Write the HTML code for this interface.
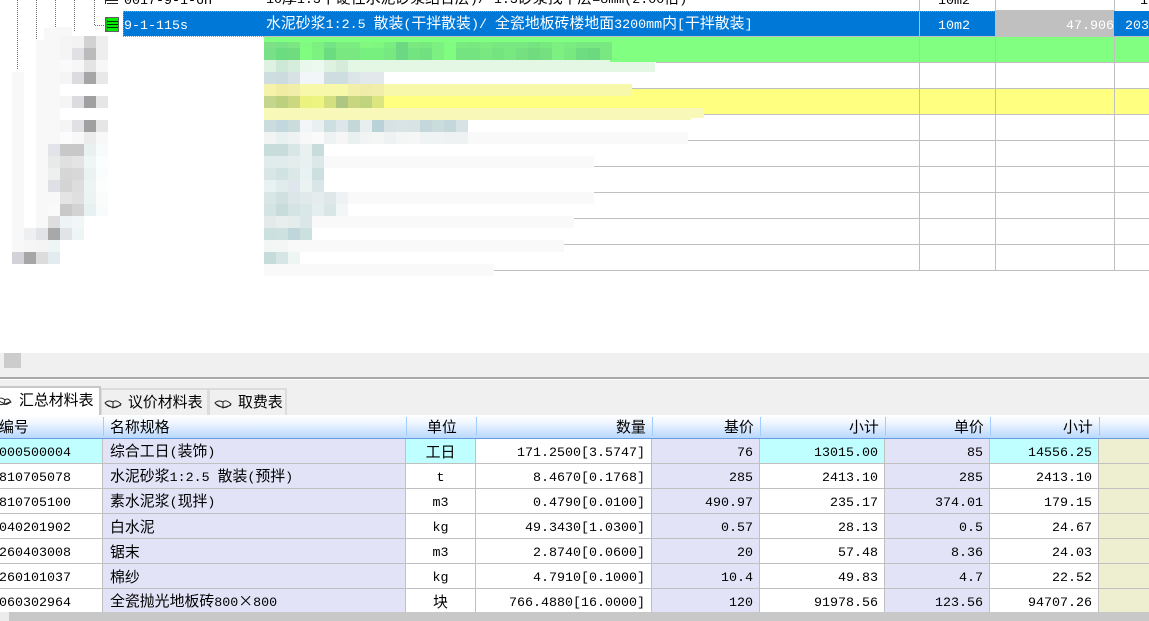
<!DOCTYPE html>
<html><head><meta charset="utf-8">
<style>
html,body{margin:0;padding:0;background:#fff}
#p{position:relative;width:1149px;height:621px;overflow:hidden;background:#fff;font-family:"WenQuanYi Zen Hei","Noto Sans CJK SC",sans-serif;font-size:14.9px;color:#000}
.a{position:absolute;white-space:nowrap;line-height:18px}
i{font-family:"Liberation Mono",monospace;font-size:13.33px;font-style:normal}
.c rect{width:12px;height:12px}
table{position:absolute;left:0;top:439px;border-collapse:separate;border-spacing:0;table-layout:fixed;width:1149px}
tr{height:25px}
td{padding:2px 6px 0;border-right:1px solid #c0c0c0;border-bottom:1px solid #c0c0c0;white-space:nowrap;overflow:hidden;box-sizing:border-box;height:25px;line-height:16px;vertical-align:middle}
td:last-child{border-right:0;background:#eeeed0}
td:nth-child(1){padding:2px 0 0;text-indent:-1px}
td:nth-child(2),td:nth-child(5),td:nth-child(7){background:#e3e3f8}
td:nth-child(2){padding-left:7px}
td:nth-child(3){text-align:center}
td:nth-child(4),td:nth-child(5),td:nth-child(6),td:nth-child(7),td:nth-child(8){text-align:right}
.k td:nth-child(1),.k td:nth-child(3),.k td:nth-child(6),.k td:nth-child(8){background:#c0ffff}
.h{position:absolute;top:418px;color:#000;white-space:nowrap;line-height:18px}
.s{position:absolute;top:417px;width:1px;height:19px;background:#a0ccff}
.tab{position:absolute;box-sizing:border-box;border:2px solid #dcdcdc;border-bottom:0;background:#f0f0f0}
</style></head><body><div id="p">

<!-- top grid rows -->
<div class="a" style="left:264px;top:37px;width:885px;height:25px;background:#80ff80"></div>
<div class="a" style="left:264px;top:89px;width:885px;height:25px;background:#ffff80"></div>
<div class="a" style="left:656px;top:62px;width:493px;height:1px;background:#c0c0c0"></div>
<div class="a" style="left:631px;top:88px;width:518px;height:1px;background:#c0c0c0"></div>
<div class="a" style="left:704px;top:114px;width:445px;height:1px;background:#c0c0c0"></div>
<div class="a" style="left:642px;top:140px;width:507px;height:1px;background:#c0c0c0"></div>
<div class="a" style="left:590px;top:166px;width:559px;height:1px;background:#c0c0c0"></div>
<div class="a" style="left:590px;top:192px;width:559px;height:1px;background:#c0c0c0"></div>
<div class="a" style="left:570px;top:218px;width:579px;height:1px;background:#c0c0c0"></div>
<div class="a" style="left:490px;top:244px;width:659px;height:1px;background:#c0c0c0"></div>
<div class="a" style="left:480px;top:270px;width:669px;height:1px;background:#c0c0c0"></div>
<div class="a" style="left:919px;top:0;width:1px;height:271px;background:#c0c0c0"></div>
<div class="a" style="left:995px;top:0;width:1px;height:271px;background:#c0c0c0"></div>
<div class="a" style="left:1114px;top:0;width:1px;height:271px;background:#c0c0c0"></div>

<!-- clipped first row -->
<div class="a" style="left:124px;top:-10px"><i>0017-9-1-6H</i></div>
<div class="a" style="left:266px;top:-11px"><i>10</i>厚<i>1:3</i>干硬性水泥砂浆结合层<i>)/ 1:3</i>砂浆找平层<i>=8mm(2.00</i>倍<i>)</i></div>
<div class="a" style="left:938px;top:-10px"><i>10m2</i></div>
<div class="a" style="left:1140px;top:-10px"><i>1</i></div>

<!-- tree lines -->
<svg class="a" style="left:0;top:0" width="125" height="80" viewBox="0 0 125 80">
<g stroke="#707070" stroke-width="1" stroke-dasharray="1 1" fill="none">
<path d="M17.5 0V70M36.5 0V58M55.5 0V27M74.5 0V31M94.5 0V25.5H105"/>
</g>
<path d="M105.500 0V4M105 .5H118M107 3.500H118" stroke="#222" fill="none"/>
<rect x="105.500" y="17.500" width="13" height="14" fill="#00f000" stroke="#606060"/>
<path d="M107 21.500H118M107 24.500H118M107 27.500H118" stroke="#003000"/>
<path d="M107 18V31" stroke="#404040" stroke-dasharray="1 1"/>
</svg>

<!-- selected row -->
<div class="a" style="left:123px;top:11px;width:1026px;height:25px;background:#0078d7"></div>
<div class="a" style="left:123px;top:11px;width:873px;height:26px;box-sizing:border-box;border:1px dotted #e08a30;border-right:0"></div>
<div class="a" style="left:264px;top:36px;width:885px;height:1px;background:#c0c0c0"></div>
<div class="a" style="left:995px;top:10px;width:119px;height:26px;background:#c0c0c0"></div>
<div class="a" style="left:919px;top:11px;width:1px;height:26px;background:#c0c0c0"></div>
<div class="a" style="left:124px;top:15px;color:#fff"><i>9-1-115s</i></div>
<div class="a" style="left:266px;top:14px;color:#fff">水泥砂浆<i>1:2.5 </i>散装<i>(</i>干拌散装<i>)/ </i>全瓷地板砖楼地面<i>3200mm</i>内<i>[</i>干拌散装<i>]</i></div>
<div class="a" style="left:938px;top:15px;color:#fff"><i>10m2</i></div>
<div class="a" style="left:1066px;top:15px;color:#fff"><i>47.906</i></div>
<div class="a" style="left:1125px;top:15px;color:#fff"><i>203</i></div>

<!-- mosaic -->
<svg class="a" style="left:0;top:0" width="1149" height="300" viewBox="0 0 1149 300">
<path d="M36 70V40H44V28H56V27H72V36H60V264H36ZM12 72H24V252H12Z" fill="#f8f8f8"/>
<rect x="264" y="60" width="391" height="12" fill="#e4f7e4"/>
<rect x="610" y="55" width="46" height="7" fill="#80ff80"/>
<rect x="264" y="84" width="368" height="12" fill="#f8f8aa"/>
<rect x="264" y="108" width="440" height="10" fill="#f8f8b8"/>
<rect x="264" y="118" width="427" height="2" fill="#f8f8b8"/>
<rect x="264" y="132" width="424" height="12" fill="#f9f9f9"/>
<rect x="264" y="156" width="330" height="12" fill="#f9f9f9"/>
<rect x="264" y="192" width="330" height="12" fill="#f9f9f9"/>
<rect x="264" y="216" width="310" height="12" fill="#f9f9f9"/>
<rect x="264" y="240" width="300" height="12" fill="#f9f9f9"/>
<rect x="264" y="264" width="230" height="12" fill="#f9f9f9"/>
<g class="c">
<rect x="60" y="36" fill="#f5f5f5"/><rect x="72" y="36" fill="#f3f3f3"/><rect x="84" y="36" fill="#d2d2d2"/><rect x="96" y="36" fill="#eee"/>
<rect x="60" y="48" fill="#f5f5f5"/><rect x="72" y="48" fill="#e0e0e5"/><rect x="84" y="48" fill="#bbb"/><rect x="96" y="48" fill="#eee"/>
<rect x="60" y="60" fill="#fafafa"/><rect x="72" y="60" fill="#f7f7f7"/><rect x="84" y="60" fill="#e4e4e4"/><rect x="96" y="60" fill="#f7f7f7"/>
<rect x="60" y="72" fill="#f5f5f5"/><rect x="72" y="72" fill="#dcdce0"/><rect x="84" y="72" fill="#a6a6a6"/><rect x="96" y="72" fill="#e8e8e8"/>
<rect x="60" y="96" fill="#f5f5f5"/><rect x="72" y="96" fill="#dcdce0"/><rect x="84" y="96" fill="#a0a0a0"/><rect x="96" y="96" fill="#e6e6e6"/>
<rect x="60" y="120" fill="#f5f5f5"/><rect x="72" y="120" fill="#e0e0e5"/><rect x="84" y="120" fill="#a0a0a0"/><rect x="96" y="120" fill="#e6e6e6"/>
<rect x="60" y="132" fill="#fcfcfc"/><rect x="72" y="132" fill="#f8f8f8"/><rect x="84" y="132" fill="#ececec"/><rect x="96" y="132" fill="#f8f8f8"/>
<rect x="48" y="144" fill="#e3e3ea"/><rect x="60" y="144" fill="#c8c8c8"/><rect x="72" y="144" fill="#c8c8c8"/><rect x="84" y="144" fill="#e8f0f0"/><rect x="96" y="144" fill="#f8fbfb"/>
<rect x="48" y="156" fill="#e8e9e9"/><rect x="60" y="156" fill="#e0e0e0"/><rect x="72" y="156" fill="#e4e4e4"/><rect x="84" y="156" fill="#f0f6f6"/><rect x="96" y="156" fill="#fbfefe"/>
<rect x="48" y="168" fill="#eef0f0"/><rect x="60" y="168" fill="#d6d6d6"/><rect x="72" y="168" fill="#d8d8d8"/><rect x="84" y="168" fill="#eaf2f2"/><rect x="96" y="168" fill="#fafdfd"/>
<rect x="48" y="180" fill="#dfdfe6"/><rect x="60" y="180" fill="#d4d4d4"/><rect x="72" y="180" fill="#ddd"/><rect x="84" y="180" fill="#ecf4f4"/><rect x="96" y="180" fill="#fcfefe"/>
<rect x="48" y="192" fill="#f8f8f8"/><rect x="60" y="192" fill="#e4e4e4"/><rect x="72" y="192" fill="#dfdfdf"/><rect x="84" y="192" fill="#ecf3f3"/><rect x="96" y="192" fill="#fafcfc"/>
<rect x="48" y="204" fill="#fafafa"/><rect x="60" y="204" fill="#c9c9c9"/><rect x="72" y="204" fill="#d3d3d3"/><rect x="84" y="204" fill="#e8f1f1"/><rect x="96" y="204" fill="#f8fbfb"/>
<rect x="48" y="216" fill="#dedede"/><rect x="60" y="216" fill="#eef3f5"/><rect x="72" y="216" fill="#f2f6f7"/>
<rect x="24" y="228" fill="#eeeff1"/><rect x="36" y="228" fill="#e2e3e6"/><rect x="48" y="228" fill="#a8a8a8"/><rect x="60" y="228" fill="#e0e4e6"/><rect x="72" y="228" fill="#eef5f5"/>
<rect x="24" y="240" fill="#f6f6f6"/><rect x="36" y="240" fill="#f4f4f4"/><rect x="48" y="240" fill="#eef5f5"/>
<rect x="12" y="252" fill="#d2d2d8"/><rect x="24" y="252" fill="#a6a6a6"/><rect x="36" y="252" fill="#dcdcdc"/><rect x="48" y="252" fill="#e2ebed"/>

<rect x="264" y="60" fill="#dff2e2"/><rect x="276" y="60" fill="#cde8d6"/><rect x="288" y="60" fill="#d6eddb"/><rect x="300" y="60" fill="#e8f8ea"/><rect x="312" y="60" fill="#ecf9ee"/><rect x="324" y="60" fill="#dff2e2"/><rect x="336" y="60" fill="#d6ebd9"/>
<rect x="264" y="72" fill="#cddde0"/><rect x="276" y="72" fill="#ccdbdf"/><rect x="288" y="72" fill="#d8e2e4"/><rect x="300" y="72" fill="#f2f6f8"/><rect x="312" y="72" fill="#f2f6f8"/><rect x="324" y="72" fill="#cddde0"/><rect x="336" y="72" fill="#cddde0"/><rect x="348" y="72" fill="#dce5e8"/><rect x="360" y="72" fill="#e2e8eb"/><rect x="372" y="72" fill="#e2e8eb"/>
<rect x="264" y="84" fill="#f5f3aa"/><rect x="276" y="84" fill="#f0eca4"/><rect x="288" y="84" fill="#f0eea8"/><rect x="348" y="84" fill="#f2f0a8"/><rect x="360" y="84" fill="#eeeca8"/><rect x="372" y="84" fill="#f0eeaa"/>
<rect x="264" y="96" fill="#c4d68c"/><rect x="276" y="96" fill="#bcd07e"/><rect x="288" y="96" fill="#ccd880"/><rect x="300" y="96" fill="#ecf280"/><rect x="312" y="96" fill="#eef480"/><rect x="324" y="96" fill="#d4e080"/><rect x="336" y="96" fill="#aec680"/><rect x="348" y="96" fill="#c8d680"/><rect x="360" y="96" fill="#c0d480"/><rect x="372" y="96" fill="#dce680"/>
<rect x="264" y="120" fill="#cbdcdf"/><rect x="276" y="120" fill="#c3d8de"/><rect x="288" y="120" fill="#cbdcdc"/><rect x="300" y="120" fill="#f2f6f8"/><rect x="312" y="120" fill="#e8f0f0"/><rect x="324" y="120" fill="#cddfe0"/><rect x="336" y="120" fill="#dde6e8"/><rect x="348" y="120" fill="#c4d8d9"/><rect x="360" y="120" fill="#e6eef0"/><rect x="372" y="120" fill="#b8d2d8"/><rect x="384" y="120" fill="#d6e2e3"/><rect x="396" y="120" fill="#d8e4e6"/><rect x="408" y="120" fill="#d8e4e4"/><rect x="420" y="120" fill="#c4d8dc"/><rect x="432" y="120" fill="#cbdcdc"/><rect x="444" y="120" fill="#c4d8dc"/><rect x="456" y="120" fill="#d6e2e3"/>
<rect x="264" y="132" fill="#f2f4f4"/><rect x="276" y="132" fill="#e9f0f0"/><rect x="288" y="132" fill="#eef2f2"/><rect x="300" y="132" fill="#f8f8f8"/><rect x="312" y="132" fill="#fafafa"/><rect x="324" y="132" fill="#eef2f2"/><rect x="336" y="132" fill="#f6f6f6"/><rect x="348" y="132" fill="#e9f0f0"/><rect x="360" y="132" fill="#f2f4f4"/><rect x="372" y="132" fill="#f4f6f6"/><rect x="384" y="132" fill="#eef2f2"/><rect x="396" y="132" fill="#f4f6f6"/><rect x="408" y="132" fill="#f6f6f6"/><rect x="420" y="132" fill="#f0f3f3"/><rect x="432" y="132" fill="#f0f3f3"/><rect x="444" y="132" fill="#eef2f2"/><rect x="456" y="132" fill="#eef2f2"/>

<rect x="264" y="144" fill="#c8dcdc"/><rect x="276" y="144" fill="#c8dcdc"/><rect x="288" y="144" fill="#d8e6e6"/><rect x="300" y="144" fill="#e8f0f0"/><rect x="312" y="144" fill="#c8dcdc"/>
<rect x="264" y="156" fill="#e0ebeb"/><rect x="276" y="156" fill="#e0ebeb"/><rect x="288" y="156" fill="#e4ecec"/><rect x="300" y="156" fill="#e8f0f0"/><rect x="312" y="156" fill="#dce8e8"/>
<rect x="264" y="168" fill="#d8e6e6"/><rect x="276" y="168" fill="#d0e2e2"/><rect x="288" y="168" fill="#dae8e8"/><rect x="300" y="168" fill="#e8f2f2"/><rect x="312" y="168" fill="#cce0e0"/>
<rect x="264" y="180" fill="#e8f2f2"/><rect x="276" y="180" fill="#e0ecec"/><rect x="288" y="180" fill="#dee8ec"/><rect x="300" y="180" fill="#eaf2f2"/><rect x="312" y="180" fill="#d8e6e8"/>
<rect x="264" y="192" fill="#d8e6e6"/><rect x="276" y="192" fill="#d0e0e0"/><rect x="288" y="192" fill="#dce6e8"/><rect x="300" y="192" fill="#e0eaea"/><rect x="312" y="192" fill="#e4ecec"/><rect x="324" y="192" fill="#dee8e8"/><rect x="336" y="192" fill="#eef2f4"/>
<rect x="264" y="204" fill="#d4e4e4"/><rect x="276" y="204" fill="#c8dcdc"/><rect x="288" y="204" fill="#d4e4e4"/><rect x="300" y="204" fill="#d8e8e8"/><rect x="312" y="204" fill="#e4eeee"/><rect x="324" y="204" fill="#d8e6e6"/><rect x="336" y="204" fill="#f2f6f6"/>
<rect x="264" y="216" fill="#e4eaea"/><rect x="276" y="216" fill="#e8eeee"/><rect x="288" y="216" fill="#e4ecec"/><rect x="300" y="216" fill="#dae6e8"/>
<rect x="264" y="228" fill="#cce0e0"/><rect x="276" y="228" fill="#cfe0e0"/><rect x="288" y="228" fill="#bfd6da"/><rect x="300" y="228" fill="#cce0e0"/>
<rect x="264" y="240" fill="#f2f6f4"/><rect x="276" y="240" fill="#f4f6f6"/>
<rect x="264" y="252" fill="#c6dcda"/><rect x="276" y="252" fill="#d6e6e4"/><rect x="288" y="252" fill="#eef6f4"/>
</g>
<g class="c">
<rect x="264" y="42" fill="#7ee088"/><rect x="276" y="42" fill="#78e286"/><rect x="288" y="42" fill="#7ce682"/><rect x="300" y="42" fill="#80fa80"/><rect x="312" y="42" fill="#7cf080"/><rect x="324" y="42" fill="#74e484"/><rect x="336" y="42" fill="#7aec80"/><rect x="348" y="42" fill="#7aec80"/><rect x="360" y="42" fill="#82f880"/><rect x="372" y="42" fill="#80f880"/><rect x="384" y="42" fill="#78ee80"/><rect x="396" y="42" fill="#6cd884"/><rect x="408" y="42" fill="#7ce880"/><rect x="420" y="42" fill="#78e880"/><rect x="432" y="42" fill="#7cf080"/><rect x="444" y="42" fill="#80fc80"/><rect x="456" y="42" fill="#78ea80"/><rect x="468" y="42" fill="#7ae880"/><rect x="480" y="42" fill="#7cec80"/><rect x="492" y="42" fill="#78e880"/><rect x="504" y="42" fill="#7ae880"/><rect x="516" y="42" fill="#78e880"/><rect x="528" y="42" fill="#74e480"/><rect x="540" y="42" fill="#78e880"/><rect x="552" y="42" fill="#7cf080"/><rect x="564" y="42" fill="#7aec80"/><rect x="576" y="42" fill="#78e880"/><rect x="588" y="42" fill="#78e880"/><rect x="600" y="42" fill="#7ae880"/>
<rect x="264" y="48" fill="#78e088"/><rect x="276" y="48" fill="#6cdc80"/><rect x="288" y="48" fill="#70dc80"/><rect x="300" y="48" fill="#80fc80"/><rect x="312" y="48" fill="#7cf280"/><rect x="324" y="48" fill="#6cdc80"/><rect x="336" y="48" fill="#7ae880"/><rect x="348" y="48" fill="#7ae880"/><rect x="360" y="48" fill="#78f080"/><rect x="372" y="48" fill="#78f080"/><rect x="384" y="48" fill="#76ea80"/><rect x="396" y="48" fill="#6cd884"/><rect x="408" y="48" fill="#72e480"/><rect x="420" y="48" fill="#70e080"/><rect x="432" y="48" fill="#7cf080"/><rect x="444" y="48" fill="#80fc80"/><rect x="456" y="48" fill="#74e480"/><rect x="468" y="48" fill="#74e480"/><rect x="480" y="48" fill="#7ae880"/><rect x="492" y="48" fill="#74e480"/><rect x="504" y="48" fill="#78e880"/><rect x="516" y="48" fill="#74e080"/><rect x="528" y="48" fill="#70dc80"/><rect x="540" y="48" fill="#74e080"/><rect x="552" y="48" fill="#7cf080"/><rect x="564" y="48" fill="#78e880"/><rect x="576" y="48" fill="#6edc80"/><rect x="588" y="48" fill="#6cd880"/><rect x="600" y="48" fill="#78e880"/>
</g>
</svg>

<!-- splitter area -->
<div class="a" style="left:0;top:353px;width:1149px;height:63px;background:#f0f0f0"></div>
<div class="a" style="left:4px;top:353px;width:17px;height:15px;background:#ccc"></div>
<div class="a" style="left:0;top:377px;width:1149px;height:2px;background:#a8a8a8"></div>
<div class="a" style="left:0;top:379px;width:1149px;height:1px;background:#fff"></div>

<!-- tabs -->
<div class="tab" style="left:100px;top:388px;width:109px;height:28px"></div>
<div class="tab" style="left:208px;top:388px;width:79px;height:28px"></div>
<div class="tab" style="left:-3px;top:386px;width:104px;height:30px;background:#fff;border-color:#c8c8c8"></div>
<svg class="a" style="left:0;top:392px" width="280" height="20" viewBox="0 0 280 20" fill="none" stroke="#222" stroke-width="1">
<path d="M-3 8C0 5 3 6 5 8C7 6 9 7 11 10C8 12 6 13 4 12C2 13-1 13-3 11M-1 9L5 12L10 10M5 8L4 12"/>
<path d="M105 11C108 8 111 9 113 10C115 8 118 9 121 12C118 15 115 16 113 15C110 15 107 14 105 11ZM106 12L113 16L121 13M113 10L113 15"/>
<path d="M215 11C218 8 221 9 223 10C225 8 228 9 231 12C228 15 225 16 223 15C220 15 217 14 215 11ZM216 12L223 16L231 13M223 10L223 15"/>
</svg>
<div class="a" style="left:19px;top:391px">汇总材料表</div>
<div class="a" style="left:128px;top:393px">议价材料表</div>
<div class="a" style="left:238px;top:393px">取费表</div>

<!-- header -->
<div class="a" style="left:0;top:415px;width:1149px;height:23px;background:linear-gradient(#fff,#f2f7ff 30%,#b8d8ff)"></div>
<div class="a" style="left:0;top:438px;width:1149px;height:1px;background:#6a9bdc"></div>
<div class="s" style="left:103px"></div><div class="s" style="left:406px"></div><div class="s" style="left:476px"></div><div class="s" style="left:652px"></div><div class="s" style="left:760px"></div><div class="s" style="left:885px"></div><div class="s" style="left:990px"></div><div class="s" style="left:1099px"></div>
<div class="h" style="left:-1px">编号</div>
<div class="h" style="left:110px">名称规格</div>
<div class="h" style="left:427px">单位</div>
<div class="h" style="left:616px">数量</div>
<div class="h" style="left:724px">基价</div>
<div class="h" style="left:849px">小计</div>
<div class="h" style="left:954px">单价</div>
<div class="h" style="left:1063px">小计</div>

<!-- data -->
<table>
<colgroup><col style="width:103px"><col style="width:303px"><col style="width:70px"><col style="width:176px"><col style="width:108px"><col style="width:125px"><col style="width:105px"><col style="width:109px"><col style="width:50px"></colgroup>
<tr class="k"><td><i>000500004</i></td><td>综合工日<i>(</i>装饰<i>)</i></td><td>工日</td><td><i>171.2500[3.5747]</i></td><td><i>76</i></td><td><i>13015.00</i></td><td><i>85</i></td><td><i>14556.25</i></td><td></td></tr>
<tr><td><i>810705078</i></td><td>水泥砂浆<i>1:2.5 </i>散装<i>(</i>预拌<i>)</i></td><td><i>t</i></td><td><i>8.4670[0.1768]</i></td><td><i>285</i></td><td><i>2413.10</i></td><td><i>285</i></td><td><i>2413.10</i></td><td></td></tr>
<tr><td><i>810705100</i></td><td>素水泥浆<i>(</i>现拌<i>)</i></td><td><i>m3</i></td><td><i>0.4790[0.0100]</i></td><td><i>490.97</i></td><td><i>235.17</i></td><td><i>374.01</i></td><td><i>179.15</i></td><td></td></tr>
<tr><td><i>040201902</i></td><td>白水泥</td><td><i>kg</i></td><td><i>49.3430[1.0300]</i></td><td><i>0.57</i></td><td><i>28.13</i></td><td><i>0.5</i></td><td><i>24.67</i></td><td></td></tr>
<tr><td><i>260403008</i></td><td>锯末</td><td><i>m3</i></td><td><i>2.8740[0.0600]</i></td><td><i>20</i></td><td><i>57.48</i></td><td><i>8.36</i></td><td><i>24.03</i></td><td></td></tr>
<tr><td><i>260101037</i></td><td>棉纱</td><td><i>kg</i></td><td><i>4.7910[0.1000]</i></td><td><i>10.4</i></td><td><i>49.83</i></td><td><i>4.7</i></td><td><i>22.52</i></td><td></td></tr>
<tr><td><i>060302964</i></td><td>全瓷抛光地板砖<i>800</i>×<i>800</i></td><td>块</td><td><i>766.4880[16.0000]</i></td><td><i>120</i></td><td><i>91978.56</i></td><td><i>123.56</i></td><td><i>94707.26</i></td><td></td></tr>
</table>

<!-- bottom scrollbar -->
<div class="a" style="left:0;top:612px;width:1149px;height:9px;background:#c8c8c8"></div>
<div class="a" style="left:0;top:612px;width:9px;height:9px;background:#ececec"></div>
</div></body></html>
